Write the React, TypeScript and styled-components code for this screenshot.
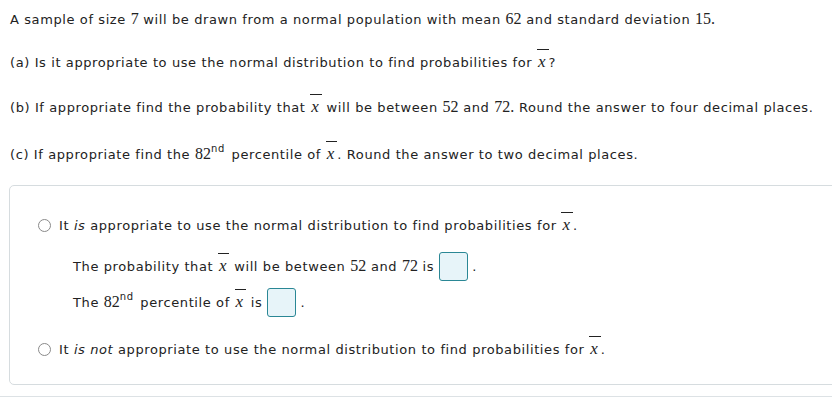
import * as React from 'react'
import styled, {createGlobalStyle} from 'styled-components'

const GlobalStyle = createGlobalStyle`
  html, body {
    margin: 0;
    padding: 0;
    background: #ffffff;
  }
  body {
    font-family: Verdana, "DejaVu Sans", sans-serif;
    font-size: 13px;
    letter-spacing: 0.6px;
    color: #222222;
    overflow: hidden;
  }
`

const Page = styled.div`
  width: 832px;
  height: 406px;
  overflow: hidden;
  position: relative;
`

const Question = styled.div`
  padding: 9px 0 0 10px;
`

const Line = styled.p<{gap?: number}>`
  margin: ${p => p.gap || 0}px 0 0;
  height: 20px;
  line-height: 20px;
  white-space: nowrap;
`

const Num = styled.span`
  font-family: "Liberation Serif", "Times New Roman", serif;
  font-size: 16px;
  letter-spacing: 0;
`

const Sup = styled.sup`
  font-size: 10px;
  line-height: 0;
  vertical-align: 7px;
  margin-right: 2px;
`

const XBar = styled.span`
  position: relative;
  display: inline-block;
  font-family: "Liberation Serif", "Times New Roman", serif;
  font-style: italic;
  font-size: 17px;
  line-height: 16px;
  letter-spacing: 0;
  padding: 0 3px 0 1px;

  &::before {
    content: '';
    position: absolute;
    left: 0;
    right: 0;
    top: -5px;
    border-top: 1px solid #222222;
  }
`

const AnswerBox = styled.div`
  margin: 21px -20px 0 9px;
  border: 1px solid #d6dcdf;
  border-radius: 5px;
  padding: 29px 0 25px 28px;
`

const RadioRow = styled.label<{gap?: number}>`
  display: flex;
  align-items: center;
  height: 20px;
  margin-top: ${p => p.gap || 0}px;
  white-space: nowrap;
`

const Radio = styled.span`
  width: 11px;
  height: 11px;
  border: 1px solid #8a8a8a;
  border-radius: 50%;
  margin-right: 8px;
  flex: none;
  background: #ffffff;
`

const SubBlock = styled.div`
  margin: 16px 0 0 35px;
  display: flex;
  flex-direction: column;
  gap: 6px;
`

const SubRow = styled.div`
  display: flex;
  align-items: center;
  height: 30px;
  white-space: nowrap;
`

const Blank = styled.span`
  display: inline-block;
  width: 27px;
  height: 27px;
  border: 1px solid #2a8795;
  border-radius: 3px;
  background: #e7f4f9;
  margin: 0 4px 0 5px;
`

const Separator = styled.div`
  margin-top: 11px;
  border-top: 1px solid #dde2e5;
`

export default function App() {
  return (
    <Page>
      <GlobalStyle/>
      <Question>
        <Line>
          A sample of size <Num>7</Num> will be drawn from a normal population with mean <Num>62</Num> and
          standard deviation <Num>15.</Num>
        </Line>
        <Line gap={24}>
          (a) Is it appropriate to use the normal distribution to find probabilities for <XBar>x</XBar>?
        </Line>
        <Line gap={24}>
          (b) If appropriate find the probability that <XBar>x</XBar> will be between <Num>52</Num> and <Num>72.</Num> Round
          the answer to four decimal places.
        </Line>
        <Line gap={27}>
          (c) If appropriate find the <Num>82</Num><Sup>nd</Sup> percentile of <XBar>x</XBar>. Round the answer to two
          decimal places.
        </Line>
      </Question>
      <AnswerBox>
        <RadioRow>
          <Radio/>
          <span>It <i>is</i> appropriate to use the normal distribution to find probabilities for <XBar>x</XBar>.</span>
        </RadioRow>
        <SubBlock>
          <SubRow>
            <span>The probability that <XBar>x</XBar> will be between <Num>52</Num> and <Num>72</Num> is</span>
            <Blank/>.
          </SubRow>
          <SubRow>
            <span>The <Num>82</Num><Sup>nd</Sup> percentile of <XBar>x</XBar> is</span>
            <Blank/>.
          </SubRow>
        </SubBlock>
        <RadioRow gap={22}>
          <Radio/>
          <span>It <i>is not</i> appropriate to use the normal distribution to find probabilities for <XBar>x</XBar>.</span>
        </RadioRow>
      </AnswerBox>
      <Separator/>
    </Page>
  )
}
